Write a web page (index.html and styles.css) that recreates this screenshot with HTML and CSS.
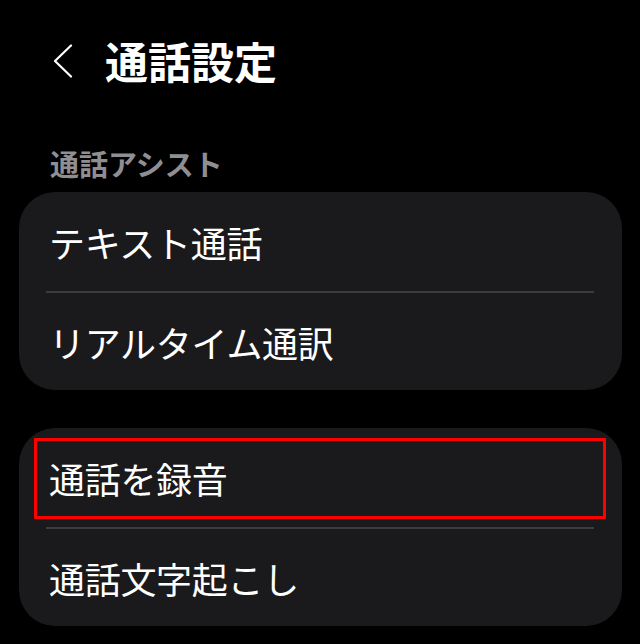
FILE: index.html
```html
<!DOCTYPE html>
<html lang="ja">
<head>
<meta charset="utf-8">
<title>通話設定</title>
<link rel="stylesheet" href="styles.css">
</head>
<body>
<div class="screen">
  <header class="topbar">
    <span class="back" aria-label="戻る">
      <svg width="20" height="34" viewBox="0 0 20 34"><polyline points="18,1.5 2,17 18,32.5" fill="none" stroke="#ffffff" stroke-width="2.2" stroke-linecap="round" stroke-linejoin="round"/></svg>
    </span>
    <h1 class="title">通話設定</h1>
  </header>
  <div class="section-label">通話アシスト</div>
  <div class="card">
    <div class="row">テキスト通話</div>
    <div class="divider"></div>
    <div class="row row-last">リアルタイム通訳</div>
  </div>
  <div class="card card-second">
    <div class="row highlighted">通話を録音<span class="marker"></span></div>
    <div class="divider"></div>
    <div class="row row-last">通話文字起こし</div>
  </div>
</div>
</body>
</html>
```
FILE: styles.css
```css
html, body {
  margin: 0;
  padding: 0;
  background: #000000;
}
body {
  width: 640px;
  height: 644px;
  overflow: hidden;
  font-family: "Noto Sans CJK JP", "Noto Sans", sans-serif;
  color: #ffffff;
}
.screen {
  display: flex;
  flex-direction: column;
}
.topbar {
  height: 124px;
  display: flex;
  align-items: center;
  padding-left: 53px;
  padding-bottom: 4px;
  box-sizing: border-box;
}
.back {
  display: flex;
  width: 20px;
  height: 34px;
  margin-top: 2px;
}
.title {
  margin: 0 0 0 32px;
  font-size: 43px;
  font-weight: 700;
  line-height: 48px;
  letter-spacing: 0;
}
.section-label {
  margin-top: 20px;
  padding-left: 50px;
  height: 38px;
  line-height: 38px;
  font-size: 29px;
  font-weight: 700;
  color: #8e8e93;
  margin-bottom: 10px;
}
.card {
  margin: 0 18px 0 19px;
  background: #1a1a1c;
  border-radius: 36px;
  height: 198px;
  display: flex;
  flex-direction: column;
}
.card-second {
  margin-top: 38px;
}
.row {
  position: relative;
  height: 99px;
  display: flex;
  align-items: center;
  padding-left: 30px;
  font-size: 36px;
  font-weight: 400;
  line-height: 40px;
  letter-spacing: -0.3px;
  box-sizing: border-box;
}
.row-last {
  height: 97px;
}
.divider {
  height: 2px;
  margin: 0 28px 0 27px;
  background: #3c3c3e;
}
.marker {
  position: absolute;
  top: 10px;
  bottom: 8px;
  left: 15px;
  right: 16px;
  border: 3px solid #ff0000;
}
```
